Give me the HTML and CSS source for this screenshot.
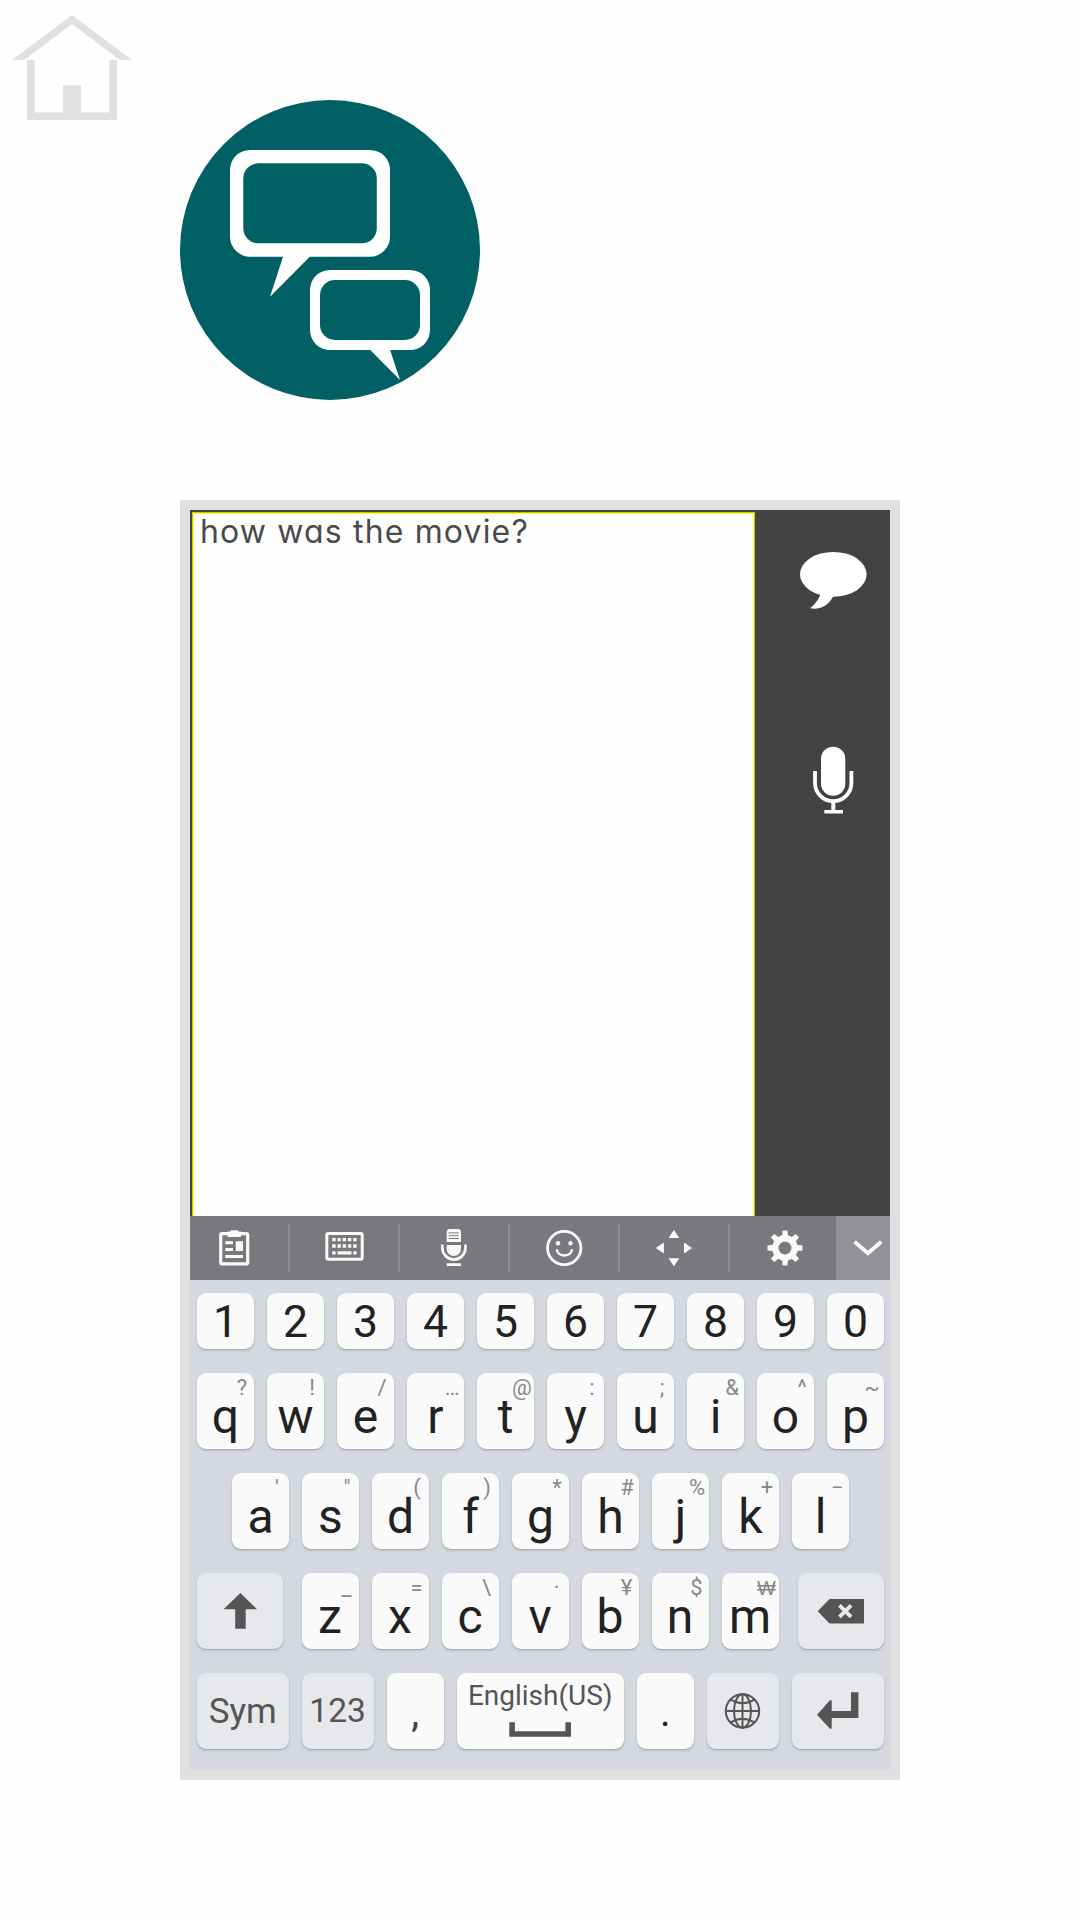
FILE: index.html
```html
<!DOCTYPE html>
<html lang="en">
<head>
<meta charset="utf-8">
<title>Chat</title>
<link rel="stylesheet" href="styles.css">
</head>
<body>
<header class="top">
  <svg class="home" viewBox="0 0 144 136" width="144" height="136">
    <path fill="#e0e0e0" fill-rule="evenodd" d="M72 15L132 60H12ZM72 24L24 60H120Z"/>
    <path fill="#e0e0e0" d="M27 60h7.500v52.500H63v-27h18v27h28.500V60H117v60H27z"/>
  </svg>
  <svg class="logo" viewBox="180 100 300 300" width="300" height="300">
    <circle cx="330" cy="250" r="150" fill="#006064"/>
    <g fill="#fff"><rect x="230" y="150" width="160" height="106.700" rx="20"/><path d="M283.300 256L270 296.700L310.500 256z"/><rect x="310" y="270" width="120" height="80" rx="20"/><path d="M370 349.800L400 380L390 349.800z"/></g>
    <g fill="#006064"><rect x="243.300" y="163.300" width="133.500" height="80" rx="15"/><rect x="320" y="280" width="100" height="60" rx="15"/></g>
  </svg>
</header>
<main class="device">
  <section class="app">
    <div class="message">how was the movie?</div>
    <aside class="side">
      <svg class="bubble" viewBox="798 550 72 62" width="72" height="62" fill="#fff"><ellipse cx="833.300" cy="574.300" rx="33.300" ry="22.400"/><path d="M821 593Q818 602 810 608.300Q826 611 834 595z"/></svg>
      <svg viewBox="798 744 72 72" width="72" height="72" fill="#fff"><rect x="821" y="746.700" width="24.300" height="49" rx="12"/><path d="M815 771v12a18.200 18.200 0 0 0 36.400 0v-12" fill="none" stroke="#fff" stroke-width="3.800"/><path d="M831.300 801h4v9h7.700v3.400h-18.700v-3.400h7z"/></svg>
    </aside>
  </section>
  <nav class="toolbar">
    <div class="tool first"><svg viewBox="210 1224 48 48"><rect x="220.700" y="1233.700" width="27" height="30.200" rx="1.500" fill="none" stroke="#fafafa" stroke-width="3.200"/><path d="M227.700 1231.500h3v-1.300h7.300v1.300h3v5.500h-13.300zM225.300 1241.300h7.700v3h-7.700zM225.300 1248h7.700v3h-7.700zM235.700 1241.300h7.300v9.700h-7.300zM225.300 1255h17.700v3h-17.700z"/></svg></div>
    <i class="sep"></i>
    <div class="tool"><svg viewBox="320 1224 48 48"><rect x="326.800" y="1233.500" width="35.400" height="25.800" rx="1.500" fill="none" stroke="#fafafa" stroke-width="3"/><path fill="none" stroke="#fafafa" stroke-width="3.400" stroke-dasharray="3.400 1.850" d="M332.200 1239.600h24.500M332.200 1246h24.500"/><path d="M332.200 1251.200h3.400v3.400h-3.400zM337.500 1251.200h14v3.400h-14zM353.300 1251.200h3.400v3.400h-3.400z"/></svg></div>
    <i class="sep"></i>
    <div class="tool"><svg viewBox="430 1224 48 48"><path d="M446.700 1242v-10q0-3 3-3h8.300q3 0 3 3v10zM446.700 1245H461v4a7.150 7 0 0 1-14.300 0zM446.700 1263.200H461v2.800h-14.300z"/><path fill="none" stroke="#fafafa" stroke-width="2.700" d="M442.300 1244.500v3a11.600 12 0 0 0 23.200 0v-3"/><path stroke="#79787d" d="M448.800 1232.900h10M448.800 1235.700h10M448.800 1238.500h10"/></svg></div>
    <i class="sep"></i>
    <div class="tool"><svg viewBox="540 1224 48 48"><circle cx="564.200" cy="1248" r="16.700" fill="none" stroke="#fafafa" stroke-width="2.800"/><circle cx="558" cy="1243.300" r="2.200"/><circle cx="570.500" cy="1243.300" r="2.200"/><path d="M557 1250.200a7.500 6.400 0 0 0 14.800 0" fill="none" stroke="#fafafa" stroke-width="2.400" stroke-linecap="round"/></svg></div>
    <i class="sep"></i>
    <div class="tool"><svg viewBox="650 1224 48 48"><path d="M673.900 1230l5.400 7.900h-10.800zM673.900 1266.200l5.400-8h-10.800zM655.700 1248l8.200-5.600v11.200zM692 1248l-8-5.600v11.200z"/></svg></div>
    <i class="sep"></i>
    <div class="tool last"><svg viewBox="760.400 1224.300 48 48"><circle cx="784.400" cy="1248.300" r="9.700" fill="none" stroke="#fafafa" stroke-width="6.400"/>
      <path id="t" d="M781.200 1238l.8-7.200h4.800l.8 7.200zM781.200 1258.600l.8 7.200h4.800l.8-7.200z"/><use href="#t" transform="rotate(45 784.400 1248.300)"/><use href="#t" transform="rotate(90 784.400 1248.300)"/><use href="#t" transform="rotate(135 784.400 1248.300)"/></svg></div>
    <div class="collapse"><svg viewBox="844 1224 48 48"><path d="M854.500 1241.800L867.900 1253.200L881.300 1241.800" fill="none" stroke="#fafafa" stroke-width="4"/></svg></div>
  </nav>
  <section class="keyboard">
    <div class="row digits"><b class="key">1</b><b class="key">2</b><b class="key">3</b><b class="key">4</b><b class="key">5</b><b class="key">6</b><b class="key">7</b><b class="key">8</b><b class="key">9</b><b class="key">0</b></div>
    <div class="row"><b class="key">q<i>?</i></b><b class="key">w<i>!</i></b><b class="key">e<i>/</i></b><b class="key">r<i>…</i></b><b class="key">t<i>@</i></b><b class="key">y<i>:</i></b><b class="key">u<i>;</i></b><b class="key">i<i>&amp;</i></b><b class="key">o<i>^</i></b><b class="key">p<i>~</i></b></div>
    <div class="row middle"><b class="key">a<i>'</i></b><b class="key">s<i>"</i></b><b class="key">d<i>(</i></b><b class="key">f<i>)</i></b><b class="key">g<i>*</i></b><b class="key">h<i>#</i></b><b class="key">j<i>%</i></b><b class="key">k<i>+</i></b><b class="key">l<i>−</i></b></div>
    <div class="row split">
      <b class="key fn wide"><svg viewBox="222 1592 36 38" width="36" height="38"><path d="M240.300 1593L257.200 1609.300H245.700V1628.800H235.200V1609.300H223.600z"/></svg></b>
      <div class="row letters"><b class="key">z<i>_</i></b><b class="key">x<i>=</i></b><b class="key">c<i>\</i></b><b class="key">v<i>·</i></b><b class="key">b<i>¥</i></b><b class="key">n<i>$</i></b><b class="key">m<i class="won">₩</i></b></div>
      <b class="key fn wide"><svg viewBox="817 1592 48 38" width="48" height="38"><path d="M817.700 1611.200L829.500 1599H864V1623.600H829.500z"/><path d="M839.500 1605.300l11.600 11.600M851.100 1605.300l-11.600 11.600" stroke="#e7e8ec" stroke-width="3.800"/></svg></b>
    </div>
    <div class="row bottom">
      <b class="key fn sym">Sym</b><b class="key fn num">123</b><b class="key punct comma">,</b>
      <b class="key space">English(US)<svg viewBox="509 1722 62 15" width="62" height="15"><path d="M509.300 1722.300h5.600v9h50.500v-9h5.600v14.400h-61.700z"/></svg></b>
      <b class="key punct">.</b>
      <b class="key fn globe"><svg viewBox="724 1692 38 38" width="38" height="38"><g fill="none" stroke="#555" stroke-width="2"><circle cx="742.500" cy="1711" r="16.700"/><ellipse cx="742.500" cy="1711" rx="8.500" ry="16.700"/><path d="M742.500 1694.300v33.400M725.800 1711h33.400M730.500 1699.500q12 7.500 24 0M730.500 1722.500q12-7.500 24 0"/></g></svg></b>
      <b class="key fn enter"><svg viewBox="815 1692 44 38" width="44" height="38"><path d="M816 1714.800L828.500 1700.700q2.200-1.500 2.200.500V1711H850v-18.700h7.400v25.800h-26.700v9.700q0 2-2.200.500z"/></svg></b>
    </div>
  </section>
</main>
</body>
</html>
```
FILE: styles.css
```css
* { box-sizing: border-box; }
body { margin: 0; width: 1080px; height: 1920px; background: #fefefe; overflow: hidden; font-family: Roboto, sans-serif; }
svg { display: block; flex: none; }
.top { display: flex; align-items: flex-start; height: 500px; }
.logo { margin: 100px 0 0 36px; }
.device { width: 720px; height: 1280px; margin-left: 180px; border: 10px solid #e0e0e0; background: #d5d8e0; }
.app { display: flex; height: 706px; padding: 2px 0 0 2px; background: #424242; }
.message { width: 563px; padding: 0 0 0 7px; background: #fefefe; border: 1px solid #c8c800; border-bottom: 0; box-shadow: inset 1px 1px 0 #ffff32, inset -1px 0 0 #ffff60; color: #4a4a4a; font: 400 32px/37px Inter, "Open Sans", sans-serif; font-feature-settings: "cv11"; letter-spacing: 1.15px; white-space: nowrap; }
.side { display: flex; flex-direction: column; gap: 132px; padding: 38px 0 0 43px; }
.toolbar { display: flex; align-items: center; height: 64px; background: #79787d; }
.toolbar svg { width: 48px; height: 48px; fill: #fafafa; }
.tool { width: 108px; display: flex; justify-content: center; }
.tool.first { width: 98px; padding-right: 10px; }
.tool.last { width: 106px; padding-left: 3px; }
.sep { width: 2px; height: 48px; background: #8e8d92; }
.collapse { width: 54px; height: 64px; padding: 8px 0 0 8px; background: #929197; overflow: hidden; }
.keyboard { display: flex; flex-direction: column; gap: 24px; padding: 13px 6px 0 7px; }
.row { display: flex; gap: 13px; }
.key { position: relative; width: 57px; height: 76px; flex: none; display: flex; justify-content: center; border-radius: 9px; background: #fafafa; box-shadow: 0 1px 1px #a9abb1, 0 2px 3px #bfc2c9; color: #222; font-weight: 400; font-size: 48px; line-height: 88px; }
.key i { position: absolute; left: 25px; top: 2px; width: 40px; text-align: center; font-style: normal; font-size: 22px; line-height: 26px; color: #888; }
.key .won { font-family: "Liberation Sans", sans-serif; font-size: 20px; }
.digits .key { height: 56px; font-size: 44.500px; line-height: 58px; }
.middle { margin-left: 35px; }
.split { justify-content: space-between; gap: 0; }
.letters { margin-right: 1px; }
.bottom { justify-content: space-between; gap: 0; }
.key.fn { background: #e7e8ec; color: #555; fill: #555; align-items: center; }
.wide { width: 86px; }
.key.sym { width: 91.500px; font-size: 35px; line-height: 76px; padding-top: 2px; }
.key.num { width: 72px; font-size: 33.500px; line-height: 76px; }
.key.punct { font-size: 40px; line-height: 80px; }
.key.comma { color: #444; }
.key.space { width: 167px; flex-direction: column; align-items: center; justify-content: flex-start; padding-top: 5px; gap: 8px; color: #555; fill: #555; font-size: 28px; line-height: 36px; }
.key.globe { width: 72px; }
.key.enter { width: 92px; }
```
